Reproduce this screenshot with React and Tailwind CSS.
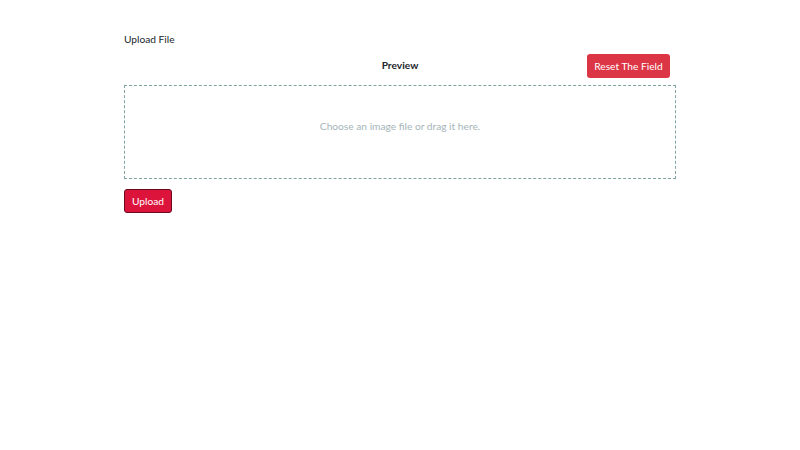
export default function App() {
  return (
    <div className="w-[800px] h-[450px] bg-white" style={{ fontFamily: 'Lato, "Noto Sans", sans-serif' }}>
      <div className="ml-[124px] w-[552px] pt-[31px]">
        <div className="text-[10.2px] font-normal leading-[16px] text-[#212529]">Upload File</div>
        <div className="relative mt-[7px] h-[24px] flex items-center justify-center">
          <span className="text-[10.2px] font-bold text-[#212529]">Preview</span>
          <button className="absolute right-[6px] top-0 h-[24px] w-[83px] pt-[2px] rounded-[3px] bg-[#dc3545] text-white text-[10.2px]">Reset The Field</button>
        </div>
        <div className="mt-[7px] h-[94px] border border-dashed border-[#7fa3a0] flex justify-center pt-[32px]">
          <span className="text-[10.2px] leading-[16px] text-[#a5b5b8]">Choose an image file or drag it here.</span>
        </div>
        <button className="mt-[10px] h-[24px] w-[48px] pt-[2px] rounded-[3px] bg-[#dc143c] border border-[#6b0a1e] text-white text-[10.2px]">Upload</button>
      </div>
    </div>
  );
}
